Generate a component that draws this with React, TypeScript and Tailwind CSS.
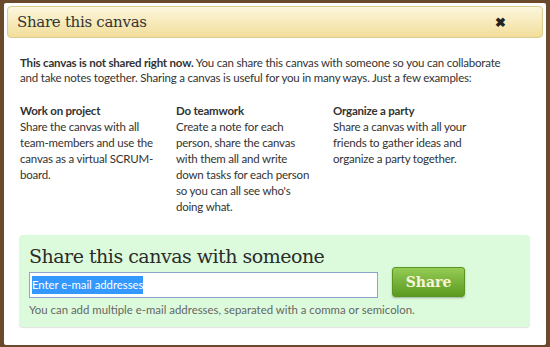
import React from "react";

const slab = { fontFamily: '"DejaVu Serif", serif' };

function Lines({ lines }: { lines: string[] }) {
  return (
    <>
      {lines.map((l, i) => (
        <div key={i} className="whitespace-nowrap">
          {l}
        </div>
      ))}
    </>
  );
}

export default function App() {
  return (
    <div
      className="w-[550px] h-[347px] bg-[#6b4a2b] pt-[3px] pl-[4px] pr-[4px] pb-[2px]"
      style={{ fontFamily: 'Lato, "Liberation Sans", sans-serif' }}
    >
      <div className="h-full bg-white rounded-[2px] p-[3px] flex flex-col">
        <div className="h-[32px] shrink-0 rounded-[4px] border border-[#dccb8e] bg-gradient-to-b from-[#fcf6dc] to-[#f2de9a] flex items-center justify-between pl-[9px] pr-[36px]">
          <span className="text-[15px] tracking-[-0.3px] text-[#333]" style={slab}>
            Share this canvas
          </span>
          <span className="text-[13px] font-bold text-[#222] leading-none">✖</span>
        </div>
        <div className="pl-[13px] pr-[10px] pt-[17px] text-[11.5px] tracking-[-0.2px] leading-[15px] text-[#333]">
          <div className="whitespace-nowrap">
            <b>This canvas is not shared right now.</b> You can share this canvas with someone so you can collaborate
          </div>
          <div className="whitespace-nowrap">
            and take notes together. Sharing a canvas is useful for you in many ways. Just a few examples:
          </div>
          <div className="grid grid-cols-[156px_157px_1fr] mt-[18px] leading-[16px]">
            <div>
              <div className="font-bold">Work on project</div>
              <Lines
                lines={["Share the canvas with all", "team-members and use the", "canvas as a virtual SCRUM-", "board."]}
              />
            </div>
            <div>
              <div className="font-bold">Do teamwork</div>
              <Lines
                lines={[
                  "Create a note for each",
                  "person, share the canvas",
                  "with them all and write",
                  "down tasks for each person",
                  "so you can all see who's",
                  "doing what.",
                ]}
              />
            </div>
            <div>
              <div className="font-bold">Organize a party</div>
              <Lines lines={["Share a canvas with all your", "friends to gather ideas and", "organize a party together."]} />
            </div>
          </div>
        </div>
        <div className="mt-[20px] ml-[12px] mr-[13px] rounded-[4px] bg-[#dcfbdc] shadow-[0_1px_1px_rgba(0,0,0,0.12)] pl-[10px] pt-[8px] pb-[10px]">
          <div className="text-[19px] tracking-[-0.5px] leading-[26px] text-[#2b2b2b]" style={slab}>
            Share this canvas with someone
          </div>
          <div className="flex items-center mt-[3px]">
            <div className="w-[349px] h-[26px] border border-[#8aa6cc] bg-white flex items-center pl-[2px]">
              <span className="bg-[#3399ff] text-white text-[11.3px] leading-[18px]">Enter e-mail addresses</span>
            </div>
            <div
              className="ml-[14px] mt-[-6px] w-[73px] h-[30px] rounded-[3px] border border-[#5a9623] bg-gradient-to-b from-[#95cc55] to-[#5b9a1e] shadow-[0_1px_2px_rgba(0,0,0,0.3)] flex items-center justify-center text-[14px] font-bold text-[#f7f5dc]"
              style={slab}
            >
              Share
            </div>
          </div>
          <div className="mt-[5px] text-[11.4px] leading-[14px] text-[#666]">
            You can add multiple e-mail addresses, separated with a comma or semicolon.
          </div>
        </div>
      </div>
    </div>
  );
}
